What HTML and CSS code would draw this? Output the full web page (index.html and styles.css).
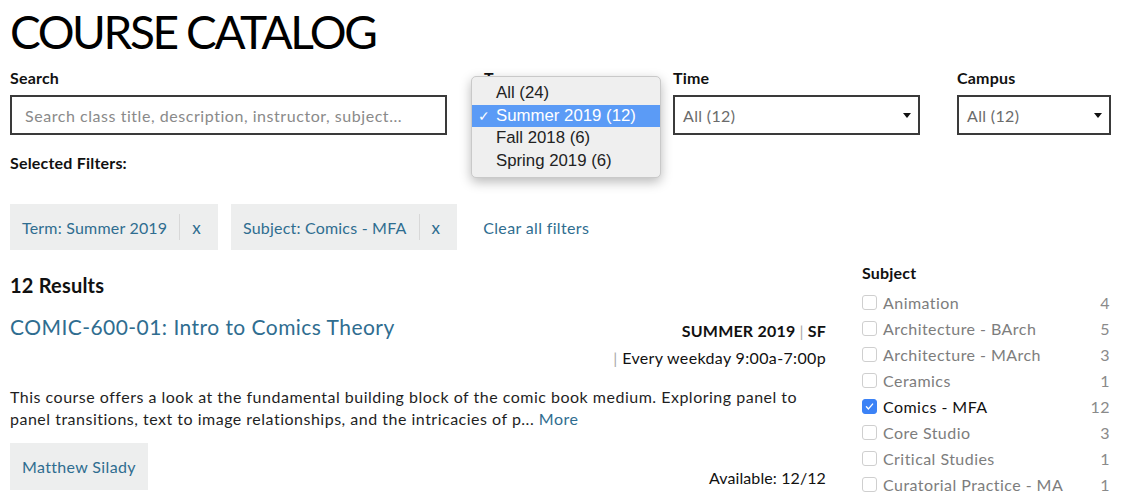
FILE: index.html
```html
<!DOCTYPE html>
<html lang="en">
<head>
<meta charset="utf-8">
<title>Course Catalog</title>
<link rel="stylesheet" href="styles.css">
</head>
<body>
<div class="page">
  <h1 class="title">COURSE CATALOG</h1>

  <div class="filters">
    <div class="field field-search">
      <label class="field-label">Search</label>
      <div class="input">Search class title, description, instructor, subject...</div>
    </div>
    <div class="field field-term">
      <label class="field-label">Term</label>
      <div class="select"><span>Summer 2019 (12)</span><span class="caret"></span></div>
      <ul class="menu">
        <li class="menu-item">All (24)</li>
        <li class="menu-item is-active"><span class="check">✓</span>Summer 2019 (12)</li>
        <li class="menu-item">Fall 2018 (6)</li>
        <li class="menu-item">Spring 2019 (6)</li>
      </ul>
    </div>
    <div class="field field-time">
      <label class="field-label">Time</label>
      <div class="select"><span>All (12)</span><span class="caret"></span></div>
    </div>
    <div class="field field-campus">
      <label class="field-label">Campus</label>
      <div class="select"><span>All (12)</span><span class="caret"></span></div>
    </div>
  </div>

  <div class="selected-label">Selected Filters:</div>

  <div class="chips">
    <div class="chip"><span>Term: Summer 2019</span><span class="chip-sep"></span><span class="chip-x">x</span></div>
    <div class="chip"><span>Subject: Comics - MFA</span><span class="chip-sep"></span><span class="chip-x">x</span></div>
    <a class="clear-link">Clear all filters</a>
  </div>

  <div class="content">
    <main class="results">
      <h2 class="results-count">12 Results</h2>
      <article class="course">
        <div class="course-head">
          <a class="course-title">COMIC-600-01: Intro to Comics Theory</a>
          <div class="course-meta">
            <div class="term-line">SUMMER 2019 <span class="pipe">|</span> SF</div>
            <div class="time-line"><span class="pipe">|</span> Every weekday 9:00a-7:00p</div>
          </div>
        </div>
        <p class="course-desc">This course offers a look at the fundamental building block of the comic book medium. Exploring panel to panel transitions, text to image relationships, and the intricacies of p... <a class="more">More</a></p>
        <div class="course-foot">
          <a class="instructor">Matthew Silady</a>
          <div class="available">Available: 12/12</div>
        </div>
      </article>
    </main>

    <aside class="sidebar">
      <h3 class="side-title">Subject</h3>
      <ul class="facet">
        <li class="facet-item"><span class="box"></span><span class="facet-name">Animation</span><span class="facet-count">4</span></li>
        <li class="facet-item"><span class="box"></span><span class="facet-name">Architecture - BArch</span><span class="facet-count">5</span></li>
        <li class="facet-item"><span class="box"></span><span class="facet-name">Architecture - MArch</span><span class="facet-count">3</span></li>
        <li class="facet-item"><span class="box"></span><span class="facet-name">Ceramics</span><span class="facet-count">1</span></li>
        <li class="facet-item is-checked"><span class="box"><svg viewBox="0 0 16 16" width="11" height="11"><path d="M3.5 8.5 L6.5 11.5 L12.5 4.5" fill="none" stroke="#fff" stroke-width="2" stroke-linecap="round" stroke-linejoin="round"/></svg></span><span class="facet-name">Comics - MFA</span><span class="facet-count">12</span></li>
        <li class="facet-item"><span class="box"></span><span class="facet-name">Core Studio</span><span class="facet-count">3</span></li>
        <li class="facet-item"><span class="box"></span><span class="facet-name">Critical Studies</span><span class="facet-count">1</span></li>
        <li class="facet-item"><span class="box"></span><span class="facet-name">Curatorial Practice - MA</span><span class="facet-count">1</span></li>
      </ul>
    </aside>
  </div>
</div>
</body>
</html>
```

FILE: styles.css
```css
* { box-sizing: border-box; }
html, body { margin: 0; padding: 0; background: #fff; }
body {
  font-family: "Lato", "Noto Sans", sans-serif;
  color: #1a1a1a;
  font-size: 16px;
  letter-spacing: 0.35px;
  overflow: hidden;
}
.page { padding: 0 19px 0 10px; width: 1130px; }

.title {
  margin: 0;
  padding-top: 6px;
  font-size: 46px;
  line-height: 52px;
  font-weight: 400;
  letter-spacing: -2.4px;
  color: #000;
}

.filters { display: flex; gap: 37px; margin-top: 10px; }
.field { display: flex; flex-direction: column; }
.field-label { font-size: 16px; font-weight: 700; line-height: 20px; color: #111; letter-spacing: 0.2px; }
.field-search { width: 437px; }
.field-term { width: 152px; position: relative; }
.field-time { width: 247px; }
.field-campus { width: 154px; }

.input, .select {
  margin-top: 7px;
  height: 40px;
  border: 2px solid #3a3a3a;
  display: flex;
  align-items: center;
  color: #8a8a8a;
  font-size: 16px;
}
.input { padding-left: 13px; letter-spacing: 0.55px; }
.select { padding: 0 7px 0 8px; justify-content: space-between; color: #6b6b6b; }
.caret {
  width: 0; height: 0;
  border-left: 4px solid transparent;
  border-right: 4px solid transparent;
  border-top: 5px solid #111;
}

.menu {
  position: absolute;
  left: -13px;
  top: 8px;
  width: 190px;
  margin: 0;
  padding: 5px 0 5px;
  list-style: none;
  background: #efefef;
  border: 1px solid #c9c9c9;
  border-radius: 5px;
  box-shadow: 0 4px 12px rgba(0,0,0,0.28);
  font-family: "Liberation Sans", Arial, sans-serif;
  font-size: 16.8px;
  letter-spacing: 0;
  color: #222;
}
.menu-item { height: 22.5px; line-height: 22.5px; padding-left: 24px; position: relative; }
.menu-item.is-active { background: #5b9bf6; color: #fff; }
.check { position: absolute; left: 6px; top: 0; font-size: 14px; }

.selected-label { margin-top: 18px; font-weight: 700; font-size: 16px; line-height: 20px; color: #111; letter-spacing: 0.2px; }

.chips { display: flex; align-items: center; gap: 13px; margin-top: 31px; }
.chip {
  display: flex; align-items: center;
  height: 46px;
  background: #edeeee;
  padding: 0 17px 0 12px;
  color: #2f6d90;
  font-size: 16px;
  letter-spacing: 0.2px;
}
.chip-sep { width: 1px; height: 26px; background: #d8d8d8; margin: 0 12px; }
.chip-x { font-size: 17px; }
.clear-link { color: #2f6d90; margin-left: 13px; }

.content { display: flex; gap: 36px; margin-top: 20px; }
.results { width: 816px; }
.results-count { margin: 0; font-size: 20px; font-weight: 700; line-height: 30px; color: #111; letter-spacing: 0.2px; }

.course-head { display: flex; justify-content: space-between; margin-top: 13px; }
.course-title { color: #2f6d90; font-size: 21px; line-height: 28px; letter-spacing: 0.45px; }
.course-meta { text-align: right; padding-top: 7px; }
.term-line { font-weight: 700; line-height: 22px; color: #111; letter-spacing: 0.2px; }
.time-line { line-height: 22px; margin-top: 5px; color: #111; }
.pipe { color: #aaa; font-weight: 400; }

.course-desc { margin: 17px 0 0; line-height: 22px; color: #1f1f1f; letter-spacing: 0.5px; }
.more { color: #2f6d90; }

.course-foot { display: flex; justify-content: space-between; align-items: flex-end; margin-top: 13px; }
.instructor {
  background: #edeeee;
  height: 47px;
  padding: 0 12px;
  display: flex; align-items: center;
  color: #2f6d90;
}
.available { line-height: 20px; margin-bottom: 2px; color: #111; letter-spacing: 0.1px; }

.sidebar { width: 248px; margin-top: -7px; }
.side-title { margin: 0; font-size: 16px; font-weight: 700; line-height: 20px; color: #111; letter-spacing: 0.2px; }
.facet { list-style: none; margin: 6px 0 0; padding: 0; }
.facet-item { display: flex; align-items: center; height: 26px; color: #7d7d7d; letter-spacing: 0.45px; }
.facet-item.is-checked { color: #111; }
.box {
  width: 15px; height: 15px;
  border: 1px solid #cfcfcf;
  border-radius: 3px;
  background: #fff;
  margin-right: 6px;
  display: flex; align-items: center; justify-content: center;
}
.is-checked .box { background: #3b82f6; border-color: #3b82f6; }
.facet-name { flex: 1; }
.facet-count { color: #8a8a8a; }
```
